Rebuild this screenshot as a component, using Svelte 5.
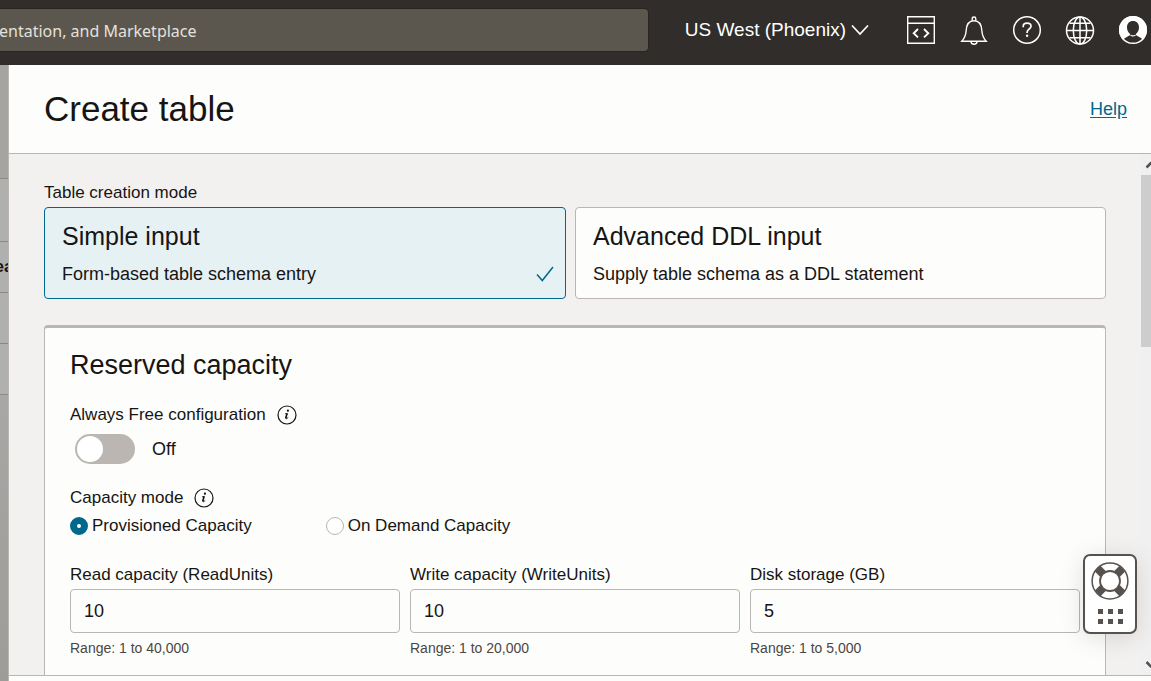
<script>
  let mode = $state('simple');
  let capacity = $state('provisioned');
  let free = $state(false);

  const modes = [
    { id: 'simple', title: 'Simple input', text: 'Form-based table schema entry' },
    { id: 'ddl', title: 'Advanced DDL input', text: 'Supply table schema as a DDL statement' }
  ];
  let fields = $state([
    { id: 'read', label: 'Read capacity (ReadUnits)', value: '10', hint: 'Range: 1 to 40,000' },
    { id: 'write', label: 'Write capacity (WriteUnits)', value: '10', hint: 'Range: 1 to 20,000' },
    { id: 'disk', label: 'Disk storage (GB)', value: '5', hint: 'Range: 1 to 5,000' }
  ]);
</script>

{#snippet info()}
  <svg class="info" viewBox="0 0 20 20" width="20" height="20" aria-hidden="true">
    <circle cx="10" cy="10" r="9" fill="none" stroke="#161513" stroke-width="1.2" />
    <circle cx="10.9" cy="5.7" r="1.1" fill="#161513" />
    <path d="M8.100 8.900c.8-.1 1.500-.4 2-.6l-1.300 4.700c-.2 1 .4 1.100 2.400-.5" fill="none" stroke="#161513" stroke-width="1" />
    <path d="M10.100 8.200L8.800 13.200" fill="none" stroke="#161513" stroke-width="1.500" />
  </svg>
{/snippet}

<div class="page">
  <header class="top">
    <input class="search" type="text" placeholder="entation, and Marketplace" aria-label="Search" />
    <button class="region">
      US West (Phoenix)
      <svg viewBox="0 0 18 12" width="18" height="12" fill="none" stroke="#fff" stroke-width="1.7"><path d="M1 1.5l8 8.5 8-8.5" /></svg>
    </button>
    <nav class="icons" aria-label="Tools">
      <button aria-label="Developer tools">
        <svg viewBox="0 0 30 30" width="30" height="30" fill="none" stroke="#fff" stroke-width="1.4">
          <path d="M1.7 1.700h26.600v26.600H1.700zM1.700 8.200h26.600" />
          <path d="M12 14l-4.300 4.200 4.300 4.200M18 14l4.300 4.200-4.300 4.200" stroke-width="1.900" />
        </svg>
      </button>
      <button aria-label="Notifications">
        <svg viewBox="0 0 30 30" width="30" height="30" fill="none" stroke="#fff" stroke-width="1.4">
          <path d="M13.200 5.800V3.800a1.800 1.800 0 0 1 3.600 0v2" />
          <path d="M2.800 26.300h24.400c-2.600-3-4-6-4.300-10.300-.3-6.600-2.900-10.200-7.900-10.200S7.400 9.400 7.100 16C6.800 20.300 5.400 23.300 2.800 26.300z" />
          <path d="M12 26.500a3 2.700 0 0 0 6 0" />
        </svg>
      </button>
      <button aria-label="Support">
        <svg viewBox="0 0 30 30" width="30" height="30" fill="none" stroke="#fff">
          <circle cx="15" cy="15" r="13.300" stroke-width="1.500" />
          <path d="M11.200 12.200v-.700c0-2.200 1.500-3.300 3.900-3.300s3.900 1.200 3.900 3.100c0 2.800-3.900 2.700-3.900 6v.700" stroke-width="1.700" />
          <circle cx="15.100" cy="20.700" r="1.200" fill="#fff" stroke="none" />
        </svg>
      </button>
      <button aria-label="Language">
        <svg viewBox="0 0 30 30" width="30" height="30" fill="none" stroke="#fff" stroke-width="1.500">
          <circle cx="15" cy="15.500" r="13.500" />
          <ellipse cx="15" cy="15.500" rx="6.700" ry="13.500" />
          <path d="M15 2v27M1.500 15.500h27M4.500 8.200h21M4.500 22.800h21" />
        </svg>
      </button>
      <button aria-label="Profile">
        <svg viewBox="0 0 30 30" width="30" height="30">
          <circle cx="15" cy="15" r="14" fill="#fff" />
          <path d="M15 6c3.700 0 6 2.700 6 6.300 0 3-1.300 5.400-3.100 6.600l-.1 1 5.500 3.400c.7.500 1.100 1.100 1.300 1.900A14 14 0 0 1 15 29a14 14 0 0 1-9.600-3.800c.2-.8.600-1.400 1.300-1.900l5.500-3.400-.1-1C10.300 17.700 9 15.300 9 12.300 9 8.700 11.300 6 15 6z" fill="#312d2a" />
          <path d="M12.500 20.200q2.500 1.200 5 0" stroke="#fff" stroke-width="1.200" fill="none" />
          <circle cx="15" cy="15" r="13.300" fill="none" stroke="#fff" stroke-width="1.400" />
        </svg>
      </button>
    </nav>
  </header>

  <div class="stage">
    <div class="behind" aria-hidden="true">
      <div class="cell head"></div>
      <div class="cell tall"></div>
      <div class="cell"><b>ea</b></div>
      <div class="cell"></div>
      <div class="cell"></div>
      <div class="rest"></div>
    </div>

    <main class="drawer">
      <div class="title">
        <h1>Create table</h1>
        <a href="#help">Help</a>
      </div>

      <div class="body">
        <div class="content">
          <fieldset>
            <legend>Table creation mode</legend>
            <div class="modes">
              {#each modes as m}
                <label class="mode" class:selected={mode === m.id}>
                  <input class="hidden" type="radio" name="mode" value={m.id} bind:group={mode} />
                  <span class="mode-title">{m.title}</span>
                  <span class="mode-text">
                    {m.text}
                    {#if mode === m.id}
                      <svg viewBox="0 0 18 16" width="18" height="16" fill="none" stroke="#00688c" stroke-width="1.500"><path d="M1 8.500l5.300 6L17 1" /></svg>
                    {/if}
                  </span>
                </label>
              {/each}
            </div>
          </fieldset>

          <section class="card">
            <h2>Reserved capacity</h2>
            <div class="label-row">
              <label for="free">Always Free configuration</label>
              {@render info()}
            </div>
            <div class="switch-row">
              <input id="free" class="switch" type="checkbox" role="switch" bind:checked={free} />
              <span>{free ? 'On' : 'Off'}</span>
            </div>

            <div class="label-row">
              <span id="capacity-label">Capacity mode</span>
              {@render info()}
            </div>
            <div class="radios" role="radiogroup" aria-labelledby="capacity-label">
              <label><input type="radio" name="capacity" value="provisioned" bind:group={capacity} />Provisioned Capacity</label>
              <label><input type="radio" name="capacity" value="demand" bind:group={capacity} />On Demand Capacity</label>
            </div>

            <div class="fields">
              {#each fields as f}
                <div class="field">
                  <label for={f.id}>{f.label}</label>
                  <input id={f.id} type="text" bind:value={f.value} />
                  <small>{f.hint}</small>
                </div>
              {/each}
            </div>
          </section>
        </div>

        <div class="scroll" aria-hidden="true">
          <svg viewBox="0 0 10 21" width="10" height="21" fill="none" stroke="#505050" stroke-width="2.500"><path d="M5.500 13.500l5-5" /></svg>
          <div class="thumb"></div>
          <svg viewBox="0 0 10 21" width="10" height="21" fill="none" stroke="#505050" stroke-width="2.500"><path d="M5.500 8l5 5" /></svg>
        </div>
      </div>
    </main>
  </div>

  <button class="help-dock" aria-label="Get help">
    <svg viewBox="0 0 38 38" width="38" height="38" fill="none" stroke="#57524d">
      <path d="M6.700 6.700l5.400 5.400M31.300 6.700l-5.400 5.400M6.700 31.300l5.400-5.400M31.300 31.300l-5.400-5.400" stroke-width="8" />
      <circle cx="19" cy="19" r="17.900" stroke-width="1.500" />
      <circle cx="19" cy="19" r="10" fill="#fff" stroke-width="1.800" />
    </svg>
    <svg viewBox="0 0 25 15" width="25" height="15" fill="#57524d">
      <path d="M0 0h5v5H0zM10 0h5v5h-5zM20 0h5v5h-5zM0 10h5v5H0zM10 10h5v5h-5zM20 10h5v5h-5z" />
    </svg>
  </button>
</div>

<style>
  :global(body) {
    margin: 0;
    overflow: hidden;
  }
  .page, .page * {
    box-sizing: border-box;
  }
  .page {
    height: 100vh;
    display: flex;
    flex-direction: column;
    font: 17px/20px "Liberation Sans", Arial, sans-serif;
    color: #161513;
  }
  button {
    border: 0;
    padding: 0;
    background: none;
    font: inherit;
    color: inherit;
    cursor: pointer;
  }
  svg {
    display: block;
    flex: none;
  }
  .top {
    flex: none;
    height: 65px;
    padding: 0 3px 5px 0;
    display: flex;
    align-items: center;
    background: #312d2a;
    color: #fff;
  }
  .search {
    flex: 1;
    min-width: 0;
    height: 42px;
    padding: 2px 0 0;
    text-indent: -1px;
    border: 0;
    border-radius: 0 4px 4px 0;
    background: #5b564e;
    box-shadow: 0 0 0 1px #292522;
    color: #e4e1dd;
    font: 16px "Noto Sans", "Open Sans", sans-serif;
  }
  .search::placeholder {
    color: #e4e1dd;
    opacity: 1;
  }
  .region {
    display: flex;
    align-items: center;
    gap: 5px;
    margin: 0 37px;
    font-size: 19px;
    line-height: 22px;
    white-space: nowrap;
  }
  .icons {
    display: flex;
    gap: 23px;
  }
  .stage {
    flex: 1;
    min-height: 0;
    display: flex;
  }
  .behind {
    flex: none;
    width: 8px;
    display: flex;
    flex-direction: column;
    overflow: hidden;
    background: #a5a4a1;
  }
  .cell {
    flex: none;
    height: 51px;
    display: flex;
    align-items: center;
    justify-content: center;
    border-bottom: 1px solid #8b8987;
    background: #b0b0ae;
  }
  .cell.head {
    height: 114px;
    background: #a5a4a1;
  }
  .cell.tall {
    height: 63px;
  }
  .rest {
    flex: 1;
    background: linear-gradient(#a8a7a5, #9e9c99);
  }
  .drawer {
    flex: 1;
    min-width: 0;
    display: flex;
    flex-direction: column;
    padding-bottom: 5px;
    border-left: 1px solid #bbb6b1;
    background: #fdfdfb;
  }
  .title {
    flex: none;
    height: 88px;
    padding: 0 24px 0 35px;
    display: flex;
    align-items: center;
    justify-content: space-between;
  }
  h1, h2 {
    margin: 0;
    font-weight: 400;
  }
  h1 {
    font-size: 35px;
    line-height: 40px;
  }
  .title a {
    color: #00688c;
    font-size: 18px;
    text-underline-offset: 2px;
  }
  .body {
    flex: 1;
    min-height: 0;
    display: flex;
    border: solid #bbb6b1;
    border-width: 1px 0;
    background: #f3f1f0;
    overflow: hidden;
  }
  .content {
    flex: 1;
    min-width: 0;
    padding: 29px 35px 0;
  }
  fieldset {
    border: 0;
    margin: 0;
    padding: 0;
    min-width: 0;
  }
  legend {
    padding: 0;
    margin-bottom: 4px;
  }
  .modes {
    display: grid;
    grid-template-columns: 522fr 531fr;
    gap: 9px;
  }
  .mode {
    display: flex;
    flex-direction: column;
    gap: 14px;
    height: 92px;
    padding: 14px 11px 0 17px;
    border: 1px solid #bbb6b1;
    border-radius: 4px;
    background: #fdfdfb;
    cursor: pointer;
  }
  .mode.selected {
    border-color: #00688c;
    background: #e6f1f4;
  }
  .hidden {
    position: absolute;
    opacity: 0;
  }
  .mode-title {
    font-size: 25px;
    line-height: 28px;
  }
  .mode-text {
    display: flex;
    align-items: center;
    justify-content: space-between;
    font-size: 18px;
    line-height: 20px;
  }
  .card {
    height: 600px;
    margin-top: 26px;
    padding: 21px 25px;
    border: 1px solid #bbb6b1;
    border-top-width: 3px;
    border-radius: 4px;
    background: #fdfdfb;
  }
  h2 {
    font-size: 27px;
    line-height: 32px;
  }
  .label-row {
    display: flex;
    align-items: center;
    gap: 11px;
    height: 22px;
    margin-top: 23px;
  }
  .switch-row {
    display: flex;
    align-items: center;
    gap: 17px;
    height: 30px;
    margin: 8px 5px 0;
    font-size: 18px;
  }
  .switch {
    appearance: none;
    margin: 0;
    width: 60px;
    height: 30px;
    padding: 2px;
    border-radius: 15px;
    background: #bbb6b1;
  }
  .switch::before {
    content: "";
    display: block;
    width: 26px;
    height: 26px;
    border-radius: 50%;
    background: #fff;
  }
  .switch:checked {
    background: #00688c;
    padding-left: 32px;
  }
  .radios {
    display: flex;
    gap: 74px;
    margin-top: 7px;
  }
  .radios label {
    display: flex;
    align-items: center;
    gap: 4px;
  }
  .radios input {
    appearance: none;
    margin: 0;
    width: 18px;
    height: 18px;
    border: 1px solid #bbb6b1;
    border-radius: 50%;
    background: #fff;
  }
  .radios input:checked {
    border: 7px solid #00688c;
  }
  .fields {
    display: grid;
    grid-template-columns: repeat(3, 1fr);
    gap: 10px;
    margin-top: 29px;
  }
  .field {
    display: flex;
    flex-direction: column;
    min-width: 0;
  }
  .field input {
    height: 44px;
    margin: 4px 0 7px;
    padding: 0 13px;
    border: 1px solid #bbb6b1;
    border-radius: 4px;
    background: #fdfdfb;
    color: inherit;
    font: 18px "Liberation Sans", Arial, sans-serif;
  }
  small {
    color: #4a4743;
    font-size: 14px;
    line-height: 16px;
  }
  .scroll {
    flex: none;
    width: 10px;
    display: flex;
    flex-direction: column;
    background: #f0f0f0;
  }
  .thumb {
    height: 33%;
    margin-bottom: auto;
    background: #cdcdcd;
  }
  .help-dock {
    position: absolute;
    right: 14px;
    bottom: 47px;
    width: 54px;
    height: 80px;
    padding-bottom: 3px;
    display: flex;
    flex-direction: column;
    align-items: center;
    justify-content: center;
    gap: 9px;
    border: 2px solid #57524d;
    border-radius: 7px;
    background: #fff;
    box-shadow: 0 4px 24px rgba(0, 0, 0, 0.12);
  }
</style>
